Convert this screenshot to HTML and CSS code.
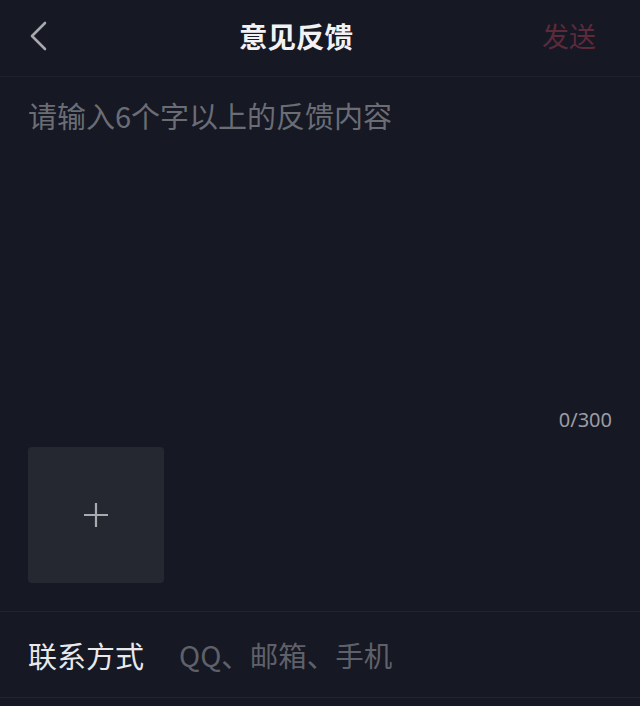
FILE: index.html
```html
<!DOCTYPE html>
<html lang="zh-CN">
<head>
  <meta charset="UTF-8">
  <title>意见反馈</title>
  <link rel="stylesheet" href="styles.css">
</head>
<body>
  <div class="page">
    <header class="topbar">
      <span class="back">
        <svg width="20" height="32" viewBox="0 0 20 32"><path d="M17 3 L4 16 L17 29" fill="none" stroke="#a7a8ad" stroke-width="2.6" stroke-linecap="round" stroke-linejoin="round"/></svg>
      </span>
      <h1 class="title">意见反馈</h1>
      <span class="send">发送</span>
    </header>

    <div class="editor">
      <div class="placeholder">请输入6个字以上的反馈内容</div>
      <div class="counter">0/300</div>
    </div>

    <div class="uploads">
      <div class="add-box">
        <svg width="26" height="26" viewBox="0 0 26 26"><path d="M13 1 V25 M1 13 H25" stroke="#a9aab0" stroke-width="2.2"/></svg>
      </div>
    </div>

    <div class="contact">
      <span class="label">联系方式</span>
      <span class="hint">QQ、邮箱、手机</span>
    </div>
  </div>
</body>
</html>
```

FILE: styles.css
```css
html, body {
  margin: 0;
  padding: 0;
  background: #161823;
}
body {
  font-family: "Noto Sans CJK SC", "Noto Sans", sans-serif;
  width: 640px;
  height: 706px;
  overflow: hidden;
}
.page {
  display: flex;
  flex-direction: column;
}
.topbar {
  height: 76px;
  display: flex;
  align-items: center;
  justify-content: space-between;
  padding: 0 44px 0 28px;
  border-bottom: 1px solid #1f212c;
  position: relative;
}
.back {
  display: flex;
  align-items: center;
  margin-top: -4px;
}
.title {
  position: absolute;
  left: 0;
  right: 48px;
  top: 0;
  margin: 0;
  text-align: center;
  font-size: 28.5px;
  font-weight: bold;
  color: #f2f2f4;
  line-height: 72px;
  pointer-events: none;
}
.send {
  font-size: 27px;
  color: #5c2a3b;
  margin-top: -6px;
}
.editor {
  height: 358px;
  padding: 0 28px;
  display: flex;
  flex-direction: column;
  justify-content: space-between;
}
.placeholder {
  margin-top: 20px;
  font-size: 29px;
  line-height: 36px;
  color: #6b6d75;
}
.counter {
  align-self: flex-end;
  font-family: "Noto Sans", sans-serif;
  font-size: 20px;
  line-height: 24px;
  color: #9b9da4;
  margin-bottom: 3px;
}
.uploads {
  padding: 12px 28px 28px;
  border-bottom: 1px solid #222430;
}
.add-box {
  width: 136px;
  height: 136px;
  background: #252731;
  border-radius: 4px;
  display: flex;
  align-items: center;
  justify-content: center;
}
.contact {
  height: 85px;
  display: flex;
  align-items: center;
  padding: 0 28px;
  border-bottom: 1px solid #222430;
}
.label {
  font-size: 29px;
  color: #e9e9ec;
  margin-right: 35px;
}
.hint {
  font-size: 28.5px;
  color: #5f616a;
}
```
